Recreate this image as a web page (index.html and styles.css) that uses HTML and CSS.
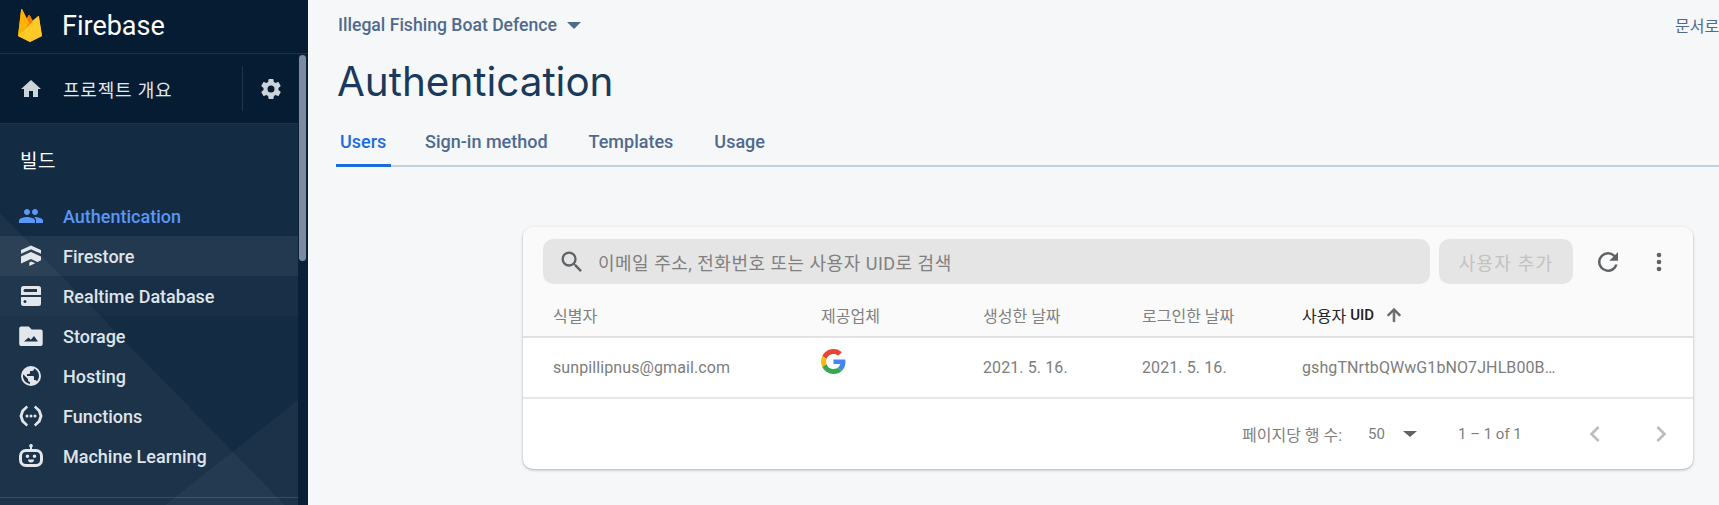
FILE: index.html
```html
<!DOCTYPE html>
<html lang="ko">
<head>
<meta charset="utf-8">
<title>Authentication - Firebase</title>
<link rel="stylesheet" href="styles.css">
</head>
<body>
<div class="app">
  <aside class="sidebar">
    <header class="brand">
      <svg class="brand-logo" viewBox="0 0 24 33" width="24" height="33">
        <path fill="#ffa000" d="M0 27 3.100.8c.1-.8.8-.9 1.100-.3L8.700 9.500 10.700 6.300c.3-.5.7-.5 1 0L14.500 11.500 20 7.300c.4-.3.8-.2.9.3L24 27 12 33z"/>
        <path fill="#f57c00" d="M8.700 9.500 10.700 6.300c.3-.5.7-.5 1 0L14.800 12 11 23 5 20z"/>
        <path fill="#ffb300" d="M0 27 3.100.8c.1-.8.8-.9 1.100-.3L11 14 4 24z"/>
        <path fill="#ffca28" d="M0 27 20 7.300c.4-.3.8-.2.9.3L24 27 13 32.500c-.7.300-1.300.300-2 0z"/>
      </svg>
      <span class="brand-name">Firebase</span>
    </header>
    <div class="sidebar-body">
      <div class="sidebar-scroll">
        <div class="project-row">
          <svg class="icon home" viewBox="0 0 24 24"><path d="M10 20v-6h4v6h5v-8h3L12 3 2 12h3v8z"/></svg>
          <span class="project-label">프로젝트 개요</span>
          <span class="project-divider"></span>
          <svg class="icon gear" viewBox="0 0 24 24"><path d="M19.400 13c.04-.32.100-.66.100-1s-.06-.68-.1-1l2.100-1.650c.2-.15.250-.42.120-.64l-2-3.460c-.12-.22-.38-.3-.6-.22l-2.500 1c-.5-.4-1.080-.73-1.700-.98l-.37-2.650A.5.5 0 0 0 14 2h-4a.5.5 0 0 0-.5.420l-.37 2.650c-.62.250-1.180.590-1.700.980l-2.500-1c-.22-.08-.48 0-.6.220l-2 3.460c-.13.220-.07.490.120.640L4.570 11c-.04.320-.07.660-.07 1s.030.680.070 1l-2.110 1.650c-.19.150-.25.420-.12.640l2 3.460c.12.220.38.300.6.220l2.500-1c.520.400 1.080.730 1.700.980l.37 2.650c.040.240.250.420.5.420h4c.250 0 .460-.18.5-.42l.37-2.650c.620-.25 1.200-.58 1.700-.98l2.500 1c.220.080.480 0 .6-.22l2-3.460c.130-.22.070-.49-.12-.64zM12 15.500a3.500 3.500 0 1 1 0-7 3.500 3.500 0 0 1 0 7z"/></svg>
        </div>
        <nav class="nav">
          <h2 class="nav-title">빌드</h2>
          <a class="nav-item active">
            <svg class="icon" viewBox="0 0 24 24"><path d="M16 11c1.660 0 3-1.340 3-3s-1.340-3-3-3-3 1.340-3 3 1.340 3 3 3zm-8 0c1.660 0 3-1.340 3-3S9.660 5 8 5 5 6.340 5 8s1.340 3 3 3zm0 2c-2.330 0-8 1.170-8 3.500V19h16v-2.500C16 14.170 10.330 13 8 13zm8 0c-.29 0-.62.020-.97.050C16.190 13.890 17 15.020 17 16.500V19h7v-2.500c0-2.330-5.670-3.500-8-3.500z"/></svg>
            Authentication
          </a>
          <a class="nav-item hover">
            <svg class="icon" viewBox="0 0 24 24"><path d="M12 1.500 22 6v3.800L12 5.300 2 9.800V6zM12 8l10 4.500v3.800l-3.600 1.600-6.400-2.900-10 4.500v-.1L2 16.300v-3.800zM12.300 17.400l4 1.800-6 2.800v-3.500z"/></svg>
            Firestore
          </a>
          <a class="nav-item faint">
            <svg class="icon" viewBox="0 0 24 24"><path d="M4.500 2h15A2.500 2.500 0 0 1 22 4.500V11H2V4.500A2.500 2.500 0 0 1 4.500 2zM6 5a1.500 1.500 0 1 0 0 3h12V5zM2 13h20v6.500a2.500 2.500 0 0 1-2.500 2.500h-15A2.500 2.500 0 0 1 2 19.500zm4 3a1.500 1.500 0 1 0 0 3 1.500 1.500 0 0 0 0-3z"/></svg>
            Realtime Database
          </a>
          <a class="nav-item">
            <svg class="icon" viewBox="0 0 24 24"><path d="M2.200 2.500h7.500l3 3h9a2 2 0 0 1 2 2V20a2 2 0 0 1-2 2H2.200a2 2 0 0 1-2-2V4.500a2 2 0 0 1 2-2zM5 17.500h14l-4-5.500-3.200 3.800-2.200-2.300z"/></svg>
            Storage
          </a>
          <a class="nav-item">
            <svg class="icon" viewBox="0 0 24 24"><path d="M12 2a10 10 0 1 0 0 20 10 10 0 0 0 0-20zM11 19.900C7 19.400 4 16 4 12c0-.6.100-1.200.200-1.800L9 15v1c0 1.100.900 2 2 2zm6.900-2.500c-.3-.8-1-1.400-1.900-1.400h-1v-3a1 1 0 0 0-1-1H8v-2h2a1 1 0 0 0 1-1V7h2a2 2 0 0 0 2-2v-.4a8 8 0 0 1 2.900 12.800z"/></svg>
            Hosting
          </a>
          <a class="nav-item">
            <svg class="icon" viewBox="0 0 24 24"><path d="M7.500 1.500 9 3.500 5 7.500 3.500 12 5 16.500l4 4-1.500 2-5-4.500L.5 12 2.500 6zM16.500 1.500 15 3.500l4 4 1.500 4.500-1.500 4.500-4 4 1.500 2 5-4.500 2-6-2-6zM8 10.500a1.500 1.500 0 1 0 0 3 1.500 1.500 0 0 0 0-3zM12 10.500a1.500 1.500 0 1 0 0 3 1.500 1.500 0 0 0 0-3zM16 10.500a1.500 1.500 0 1 0 0 3 1.500 1.500 0 0 0 0-3z"/></svg>
            Functions
          </a>
          <a class="nav-item">
            <svg class="icon" viewBox="0 0 24 24"><path d="M12 0a1.800 1.800 0 0 1 1 3.300V5h4a7 7 0 0 1 7 7v4a7 7 0 0 1-7 7H7a7 7 0 0 1-7-7v-4a7 7 0 0 1 7-7h4V3.300A1.800 1.800 0 0 1 12 0zM7 8a4 4 0 0 0-4 4v4a4 4 0 0 0 4 4h10a4 4 0 0 0 4-4v-4a4 4 0 0 0-4-4zm1.500 2.500a1.800 1.800 0 1 1 0 3.600 1.800 1.800 0 0 1 0-3.600zm7 0a1.800 1.800 0 1 1 0 3.600 1.800 1.800 0 0 1 0-3.600zM9 15.500h6a3 3 0 0 1-6 0z"/></svg>
            Machine Learning
          </a>
          <div class="nav-rule"></div>
        </nav>
      </div>
      <div class="scrollbar"><span class="scroll-thumb"></span></div>
    </div>
  </aside>

  <main class="main">
    <div class="topbar">
      <div class="crumb">Illegal Fishing Boat Defence<span class="crumb-caret"></span></div>
      <a class="docs">문서로 이동</a>
    </div>
    <h1 class="page-title">Authentication</h1>
    <div class="tabs">
      <a class="tab selected">Users</a>
      <a class="tab">Sign-in method</a>
      <a class="tab">Templates</a>
      <a class="tab">Usage</a>
    </div>

    <section class="card">
      <div class="toolbar">
        <div class="search">
          <svg class="search-icon" viewBox="0 0 24 24"><path d="M15.500 14h-.79l-.28-.27A6.470 6.470 0 0 0 16 9.500 6.500 6.500 0 1 0 9.500 16c1.610 0 3.090-.59 4.230-1.570l.27.280v.790l5 4.990L20.490 19zm-6 0A4.500 4.500 0 1 1 14 9.500 4.490 4.490 0 0 1 9.500 14z"/></svg>
          <span class="search-text">이메일 주소, 전화번호 또는 사용자 UID로 검색</span>
        </div>
        <button class="add-user">사용자 추가</button>
        <svg class="tool-icon refresh" viewBox="0 0 24 24"><path d="M17.650 6.350A7.960 7.960 0 0 0 12 4a8 8 0 1 0 7.730 10h-2.080A6 6 0 1 1 12 6c1.660 0 3.140.690 4.220 1.780L13 11h7V4z"/></svg>
        <svg class="tool-icon more" viewBox="0 0 24 24"><path d="M12 8a2 2 0 1 0 0-4 2 2 0 0 0 0 4zm0 2a2 2 0 1 0 0 4 2 2 0 0 0 0-4zm0 6a2 2 0 1 0 0 4 2 2 0 0 0 0-4z"/></svg>
      </div>
      <div class="grid-row head">
        <span>식별자</span>
        <span>제공업체</span>
        <span>생성한 날짜</span>
        <span>로그인한 날짜</span>
        <span class="sorted">사용자 <b class="uid-label">UID</b><svg class="sort-arrow" viewBox="0 0 24 24"><path d="M4 12l1.410 1.410L11 7.830V20h2V7.830l5.580 5.590L20 12l-8-8z"/></svg></span>
      </div>
      <div class="grid-row body">
        <span>sunpillipnus@gmail.com</span>
        <span class="provider">
          <svg class="google" viewBox="0 0 48 48">
            <path fill="#EA4335" d="M24 9.500c3.540 0 6.710 1.220 9.210 3.600l6.850-6.850C35.900 2.380 30.470 0 24 0 14.620 0 6.510 5.380 2.560 13.220l7.980 6.190C12.430 13.720 17.740 9.500 24 9.500z"/>
            <path fill="#4285F4" d="M46.980 24.550c0-1.570-.15-3.090-.38-4.550H24v9.020h12.940c-.58 2.960-2.260 5.480-4.780 7.180l7.730 6c4.510-4.180 7.090-10.360 7.090-17.650z"/>
            <path fill="#FBBC05" d="M10.530 28.590c-.48-1.450-.76-2.990-.76-4.590s.270-3.140.76-4.590l-7.980-6.190C.92 16.460 0 20.120 0 24c0 3.880.92 7.540 2.560 10.780l7.970-6.190z"/>
            <path fill="#34A853" d="M24 48c6.480 0 11.930-2.130 15.890-5.810l-7.730-6c-2.150 1.450-4.920 2.300-8.160 2.300-6.260 0-11.570-4.220-13.470-9.910l-7.980 6.190C6.510 42.620 14.620 48 24 48z"/>
          </svg>
        </span>
        <span>2021. 5. 16.</span>
        <span>2021. 5. 16.</span>
        <span class="uid">gshgTNrtbQWwG1bNO7JHLB00B…</span>
      </div>
      <div class="pager">
        <span class="per-page">페이지당 행 수:</span>
        <span class="page-size">50</span>
        <span class="page-caret"></span>
        <span class="page-range">1 – 1 of 1</span>
        <svg class="chevron" viewBox="0 0 24 24"><path d="M15.410 7.410 14 6l-6 6 6 6 1.410-1.410L10.830 12z"/></svg>
        <svg class="chevron" viewBox="0 0 24 24"><path d="M8.590 16.590 10 18l6-6-6-6-1.410 1.410L13.170 12z"/></svg>
      </div>
    </section>
  </main>
</div>
</body>
</html>
```

FILE: styles.css
```css
* { box-sizing: border-box; }
html, body { margin: 0; height: 100%; overflow: hidden; }
body {
  font-family: Roboto, "Noto Sans CJK KR", sans-serif;
  background: #f6f7f9;
}
.app { display: flex; height: 505px; }

/* Sidebar */
.sidebar {
  width: 308px;
  flex: none;
  display: flex;
  flex-direction: column;
  background: #051c33;
  color: #e3e7ec;
}
.brand {
  height: 54px;
  flex: none;
  display: flex;
  align-items: center;
  padding-left: 18px;
  border-bottom: 1px solid #1c3146;
}
.brand-logo { flex: none; margin-bottom: 2px; }
.brand-name {
  margin-left: 20px;
  font-size: 27px;
  color: #fff;
  margin-bottom: 2px;
}
.sidebar-body { flex: 1; display: flex; min-height: 0; }
.sidebar-scroll { flex: 1; min-width: 0; display: flex; flex-direction: column; }
.scrollbar { width: 10px; flex: none; padding: 1px 2px 0 1px; background: #0a2038; }
.scroll-thumb { display: block; height: 206px; border-radius: 4px; background: #7c8ba0; }

.project-row {
  height: 70px;
  flex: none;
  display: flex;
  align-items: center;
  padding-left: 19px;
  border-bottom: 1px solid #1c3146;
}
.icon { width: 24px; height: 24px; flex: none; fill: currentColor; }
.home { color: #cdd3da; }
.gear { color: #cdd3da; margin-left: 16px; }
.project-label { margin-left: 20px; font-size: 18px; letter-spacing: .8px; width: 179px; white-space: nowrap; }
.project-divider { width: 1px; height: 45px; background: #1f3449; }

.nav {
  flex: 1;
  background:
    linear-gradient(225.7deg, transparent 57.5%, rgba(255,255,255,.04) 57.5%) no-repeat,
    linear-gradient(141.7deg, transparent 83%, rgba(255,255,255,.035) 83%) no-repeat,
    #132b43;
}
.nav-title {
  margin: 0;
  height: 72px;
  padding: 0 0 2px 20px;
  display: flex;
  align-items: center;
  font-size: 19px;
  font-weight: 400;
  color: #fff;
  letter-spacing: .6px;
}
.nav-item {
  height: 40px;
  display: flex;
  align-items: center;
  gap: 20px;
  padding-left: 19px;
  font-size: 18px;
  font-weight: 500;
  color: #dfe4ea;
}
.nav-item .icon { color: #e3e7ec; }
.nav-item.active, .nav-item.active .icon { color: #5a97f8; }
.nav-item.hover { background: rgba(255,255,255,.07); }
.nav-item.faint { background: rgba(255,255,255,.025); }
.nav-rule { margin-top: 21px; height: 1px; background: rgba(255,255,255,.13); }

/* Main */
.main { flex: 1; min-width: 0; padding-left: 28px; overflow: hidden; }
.topbar { display: flex; align-items: center; height: 50px; padding-left: 2px; white-space: nowrap; }
.crumb { font-size: 17.600px; font-weight: 500; color: #4f6a8e; display: flex; align-items: center; }
.crumb-caret {
  margin-left: 10px;
  width: 0; height: 0;
  border-left: 7px solid transparent;
  border-right: 7px solid transparent;
  border-top: 7px solid #4f6a8e;
}
.docs { margin-left: auto; width: 44px; font-size: 16px; color: #4f6a8e; }
.page-title {
  margin: 0 0 0 1px;
  height: 64px;
  line-height: 64px;
  font-size: 40.400px;
  font-weight: 400;
  color: #1a3a5c;
  font-family: Inter, Roboto, sans-serif;
}
.tabs {
  margin-top: 8px;
  display: flex;
  height: 45px;
  border-bottom: 2px solid #c3cfe0;
}
.tab {
  padding: 7px 4px 0;
  margin-right: 33px;
  font-size: 18px;
  font-weight: 500;
  color: #4f6a8e;
  height: 45px;
  line-height: 26px;
}
.tab.selected {
  color: #1a6cdc;
  margin-right: 30px;
  width: 55px;
  border-bottom: 3px solid #1a6cdc;
  border-radius: 2px 2px 0 0;
}

.card {
  margin: 60px 26px 0 187px;
  height: 242px;
  border-radius: 10px;
  background: #fff;
  box-shadow: 0 1px 3px rgba(0,0,0,.3);
  overflow: hidden;
}
.toolbar {
  height: 69px;
  display: flex;
  align-items: flex-start;
  padding: 12px 0 0 20px;
  background: #fafafa;
}
.search {
  width: 887px;
  height: 45px;
  border-radius: 10px;
  background: #e5e5e5;
  display: flex;
  align-items: center;
  padding-left: 15px;
}
.search-icon { width: 28px; height: 28px; fill: #5f6368; flex: none; }
.search-text { margin-left: 12px; font-size: 18px; color: #808080; letter-spacing: .5px; white-space: nowrap; }
.add-user {
  margin-left: 9px;
  width: 134px;
  height: 45px;
  border: 0;
  border-radius: 10px;
  background: #e5e5e5;
  color: #c2c2c2;
  font: 400 18px Roboto, "Noto Sans CJK KR", sans-serif;
  letter-spacing: 1.200px;
}
.tool-icon { flex: none; fill: #5f6368; }
.refresh { width: 30px; height: 30px; margin: 8px 0 0 20px; }
.more { width: 28px; height: 28px; margin: 9px 0 0 22px; }

.grid-row {
  display: grid;
  grid-template-columns: 268px 162px 159px 160px 1fr;
  padding-left: 30px;
  align-items: center;
}
.head {
  height: 42px;
  padding-bottom: 2px;
  background: #fafafa;
  font-size: 16px;
  color: #808080;
  border-bottom: 2px solid #e2e2e2;
}
.sorted { color: #222; display: flex; align-items: center; gap: 4px; white-space: nowrap; }
.uid-label { font-weight: 500; font-size: 15px; }
.sort-arrow { width: 20px; height: 20px; fill: #666; stroke: #666; stroke-width: 1; margin-left: 6px; }
.body {
  height: 61px;
  font-size: 16px;
  letter-spacing: .1px;
  color: #7d7d7d;
  border-bottom: 2px solid #e7e7e7;
}
.provider { display: flex; padding-bottom: 12px; }
.google { width: 25px; height: 25px; }
.uid { white-space: nowrap; }

.pager {
  height: 70px;
  display: flex;
  align-items: center;
  font-size: 15px;
  color: #7d7d7d;
}
.pager > * { flex: none; }
.per-page { margin-left: 719px; width: 126px; font-size: 16px; color: #808080; white-space: nowrap; }
.page-size { width: 35px; }
.page-caret {
  width: 0; height: 0;
  border-left: 7px solid transparent;
  border-right: 7px solid transparent;
  border-top: 6px solid #5f6368;
}
.page-range { margin-left: 41px; width: 121px; white-space: nowrap; }
.chevron { width: 32px; height: 32px; fill: #bdbdbd; }
.chevron + .chevron { margin-left: 34px; }
```
